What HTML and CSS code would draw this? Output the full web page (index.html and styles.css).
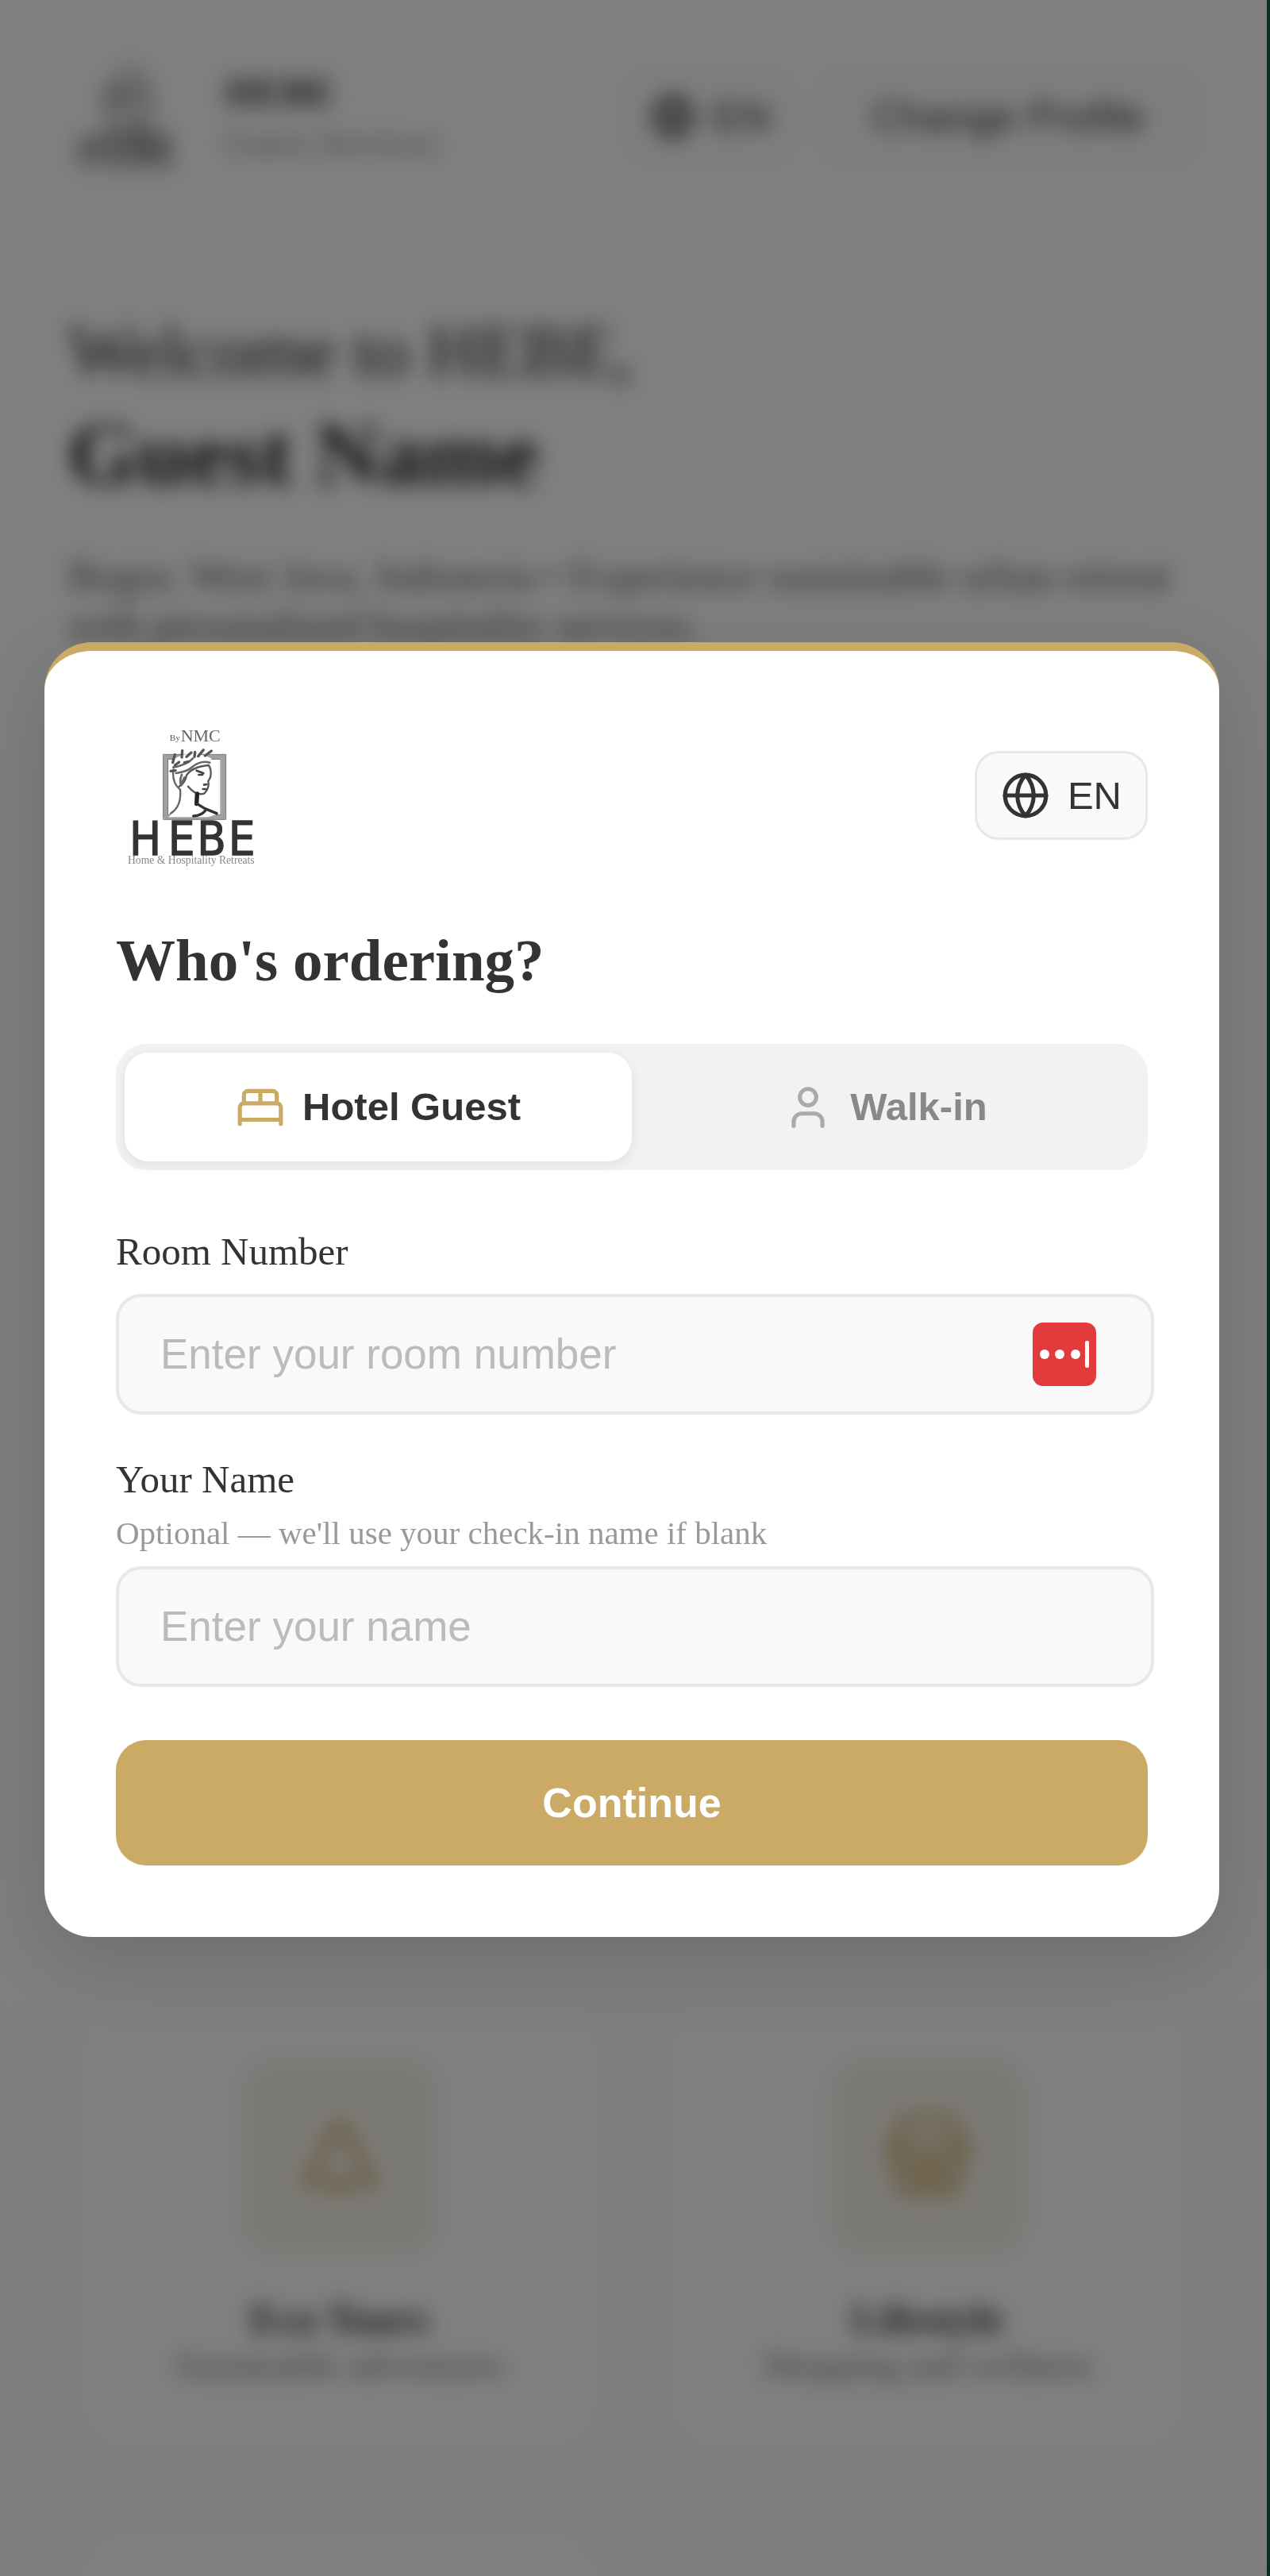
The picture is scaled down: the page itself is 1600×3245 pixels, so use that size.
FILE: index.html
```html
<!DOCTYPE html>
<html lang="en">

<head>
	<meta charset="UTF-8">
	<meta name="viewport" content="width=device-width, initial-scale=1.0">
	<title>HEBE - Guest Services</title>
	<link rel="stylesheet" href="styles.css">
</head>

<body>
	<!-- Shared icons -->
	<svg class="icon-defs" aria-hidden="true">
		<symbol id="logo" viewBox="51 60 570 540">
			<text x="254" y="124" font-size="34" fill="#555">By</text>
			<text x="296" y="126" font-size="66" fill="#666">NMC</text>
			<g fill="none" stroke-linecap="round" stroke-linejoin="round">
				<path d="M240 184H458V412H240Z" stroke="#a0a0a0" stroke-width="18" />
				<path d="M231 175H467V421H231ZM249 193H447V403H249Z" stroke="#777" stroke-width="3" />
				<path d="M262 198Q330 150 412 190L412 262Q414 280 398 318Q380 336 350 320L350 362L398 386L442 398L400 412H250L262 398Q296 370 294 310Q262 280 262 198Z" fill="#fff" stroke="none" />
				<path d="M268 232Q262 282 294 308Q300 372 258 398" stroke="#666" stroke-width="7" />
				<path d="M290 296Q312 284 318 254Q338 222 402 216Q414 232 408 262L400 276Q406 300 386 322Q356 334 324 296" stroke="#555" stroke-width="7" />
				<path d="M278 246Q322 240 340 222Q372 196 406 206M268 224Q320 214 342 190M300 252Q290 276 298 292M310 262L300 284" stroke="#666" stroke-width="8" />
				<path d="M266 206L274 176M274 216L290 204M300 186L302 160M310 206L326 202M318 184L336 168M348 184L350 166M362 182L382 158M388 180L412 162M258 238L276 236" stroke="#555" stroke-width="10" />
				<path d="M356 236L382 246M364 252L378 252M384 290L394 288M380 306L392 306" stroke="#444" stroke-width="8" />
				<path d="M358 324L356 362" stroke="#222" stroke-width="16" />
				<path d="M358 362L388 380L432 398M392 384Q374 408 344 408" stroke="#333" stroke-width="10" />
			</g>
			<g class="logo-name" font-size="178" fill="#333" stroke="#333" stroke-width="4">
				<text x="102" y="556">H</text>
				<text x="248" y="556">E</text>
				<text x="358" y="556">B</text>
				<text x="476" y="556">E</text>
			</g>
			<text x="96" y="588" font-size="41" fill="#888">Home &amp; Hospitality Retreats</text>
		</symbol>
		<symbol id="globe" viewBox="0 0 24 24">
			<circle cx="12" cy="12" r="10" />
			<path d="M2 12h20M12 2a15.3 15.3 0 0 1 4 10 15.3 15.3 0 0 1-4 10 15.3 15.3 0 0 1-4-10 15.3 15.3 0 0 1 4-10z" />
		</symbol>
	</svg>

	<div class="page">
		<!-- Header -->
		<header class="header">
			<svg class="header-logo" aria-hidden="true"><use href="#logo" /></svg>
			<div class="brand">
				<span class="brand-name">HEBE</span>
				<span class="brand-sub">Guest Services</span>
			</div>
			<button type="button" class="header-btn">
				<svg class="icon header-globe" aria-hidden="true"><use href="#globe" /></svg>
				EN
			</button>
			<button type="button" class="header-btn header-profile">Change Profile</button>
		</header>

		<!-- Welcome -->
		<section class="hero">
			<p class="hero-welcome">Welcome to HEBE,</p>
			<h1 class="hero-name">Guest Name</h1>
			<p class="hero-text">Bogor, West Java, Indonesia • Experience sustainable urban retreat with personalized hospitality services.</p>
		</section>

		<!-- Services -->
		<section class="services">
			<article class="card">
				<div class="card-icon">
					<svg class="icon" viewBox="0 0 24 24" aria-hidden="true">
						<path d="M12 4l4 6h-1l5 8H4l5-8H8zM12 18v2" />
					</svg>
				</div>
				<h3 class="card-title">Eco Tours</h3>
				<p class="card-text">Sustainable adventures</p>
			</article>
			<article class="card">
				<div class="card-icon">
					<svg class="icon" viewBox="0 0 24 24" aria-hidden="true">
						<path d="M3 9h18l-3 11H6zM4 9l3-6h10l3 6M9 13v5M12 13v5M15 13v5M4 13h16" />
					</svg>
				</div>
				<h3 class="card-title">Lifestyle</h3>
				<p class="card-text">Shopping and wellness</p>
			</article>
			<article class="card"></article>
		</section>
	</div>

	<!-- Guest dialog -->
	<div class="overlay">
		<div class="modal" role="dialog" aria-modal="true" aria-labelledby="modal-title">
			<div class="modal-header">
				<svg class="modal-logo" role="img" aria-label="HEBE by NMC"><use href="#logo" /></svg>
				<button type="button" class="lang-btn">
					<svg class="icon" aria-hidden="true"><use href="#globe" /></svg>
					EN
				</button>
			</div>

			<h2 id="modal-title" class="modal-title">Who's ordering?</h2>

			<!-- Guest type -->
			<div class="tabs">
				<button type="button" class="tab tab-active">
					<svg class="icon" viewBox="0 0 24 24" aria-hidden="true">
						<path d="M2 20v-8a2 2 0 0 1 2-2h16a2 2 0 0 1 2 2v8M4 10V6a2 2 0 0 1 2-2h12a2 2 0 0 1 2 2v4M12 4v6M2 18h20" />
					</svg>
					Hotel Guest
				</button>
				<button type="button" class="tab">
					<svg class="icon" viewBox="0 0 24 24" aria-hidden="true">
						<path d="M19 21v-2a4 4 0 0 0-4-4H9a4 4 0 0 0-4 4v2" />
						<circle cx="12" cy="7" r="4" />
					</svg>
					Walk-in
				</button>
			</div>

			<form class="guest-form">
				<!-- Room Number -->
				<div class="form-group">
					<label for="room-number">Room Number</label>
					<div class="field">
						<input type="text" id="room-number" name="room-number" placeholder="Enter your room number">
						<svg class="field-badge" viewBox="0 0 80 80" aria-hidden="true">
							<rect width="80" height="80" rx="13" fill="#e23b3b" />
							<circle cx="15" cy="40" r="6" fill="#fff" />
							<circle cx="34" cy="40" r="6" fill="#fff" />
							<circle cx="54" cy="40" r="6" fill="#fff" />
							<rect x="66" y="23" width="5" height="34" rx="2" fill="#fff" />
						</svg>
					</div>
				</div>
				<!-- Name -->
				<div class="form-group">
					<label for="guest-name">Your Name</label>
					<p class="hint" id="name-hint">Optional — we'll use your check-in name if blank</p>
					<div class="field">
						<input type="text" id="guest-name" name="guest-name" placeholder="Enter your name" aria-describedby="name-hint">
					</div>
				</div>
				<button type="submit" class="btn">Continue</button>
			</form>
		</div>
	</div>
</body>

</html>
```
FILE: styles.css
```css
* {
	box-sizing: border-box;
}

body {
	margin: 0;
	font-family: "Liberation Serif", "Times New Roman", serif;
	color: #333;
	background-color: #fff;
}

h1,
h2,
h3,
p {
	margin: 0;
}

button,
input {
	font-family: "Liberation Sans", Arial, sans-serif;
}

button {
	cursor: pointer;
}

.icon-defs {
	display: none;
}

.icon {
	flex: none;
	fill: none;
	stroke: currentColor;
	stroke-width: 2;
	stroke-linecap: round;
	stroke-linejoin: round;
}

.logo-name {
	font-family: "DejaVu Sans Condensed", Lato, sans-serif;
}

/* Page behind the dialog */
.page {
	height: 100vh;
	overflow: hidden;
	border-right: 4px solid #0f2a22;
}

/* Header */
.header {
	display: flex;
	align-items: center;
	gap: 30px;
	padding: 78px 86px 66px;
}

.header-logo {
	width: 145px;
	height: 138px;
	margin-right: 22px;
}

.brand {
	display: flex;
	flex-direction: column;
	gap: 8px;
	margin-right: auto;
}

.brand-name {
	font-size: 50px;
	font-weight: bold;
	line-height: 56px;
}

.brand-sub {
	font-size: 45px;
	line-height: 54px;
	color: #888;
}

.header-btn {
	display: flex;
	align-items: center;
	gap: 20px;
	padding: 26px;
	border: 4px solid #f5f5f5;
	border-radius: 30px;
	background-color: #fcfcfc;
	color: #333;
	font-size: 52px;
	line-height: 60px;
}

.header-globe {
	width: 60px;
	height: 60px;
}

.header-profile {
	padding: 26px 64px;
}

/* Welcome text */
.hero {
	min-height: 2243px;
	padding: 107px 86px 0;
}

.hero-welcome {
	margin-bottom: 8px;
	font-size: 90px;
	line-height: 108px;
	color: #222;
}

.hero-name {
	margin-bottom: 56px;
	font-size: 113px;
	line-height: 134px;
	color: #222;
}

.hero-text {
	font-size: 52px;
	line-height: 62px;
	color: #555;
}

/* Service cards */
.services {
	display: grid;
	grid-template-columns: 1fr 1fr;
	gap: 104px 94px;
	padding: 0 104px;
	background-color: #fcfcfc;
}

.card {
	display: flex;
	flex-direction: column;
	align-items: center;
	min-height: 560px;
	padding: 67px 30px;
	border-radius: 60px;
	background-color: #fff;
	text-align: center;
}

.card-icon {
	display: flex;
	align-items: center;
	justify-content: center;
	width: 250px;
	height: 250px;
	margin-bottom: 50px;
	border-radius: 45px;
	background-color: #f8f4ec;
	color: #d2b67c;
}

.card-icon .icon {
	width: 130px;
	height: 130px;
}

.card-title {
	font-size: 52px;
	line-height: 60px;
}

.card-text {
	font-size: 45px;
	line-height: 54px;
	color: #777;
}

/* Dialog */
.overlay {
	position: fixed;
	inset: 0 4px 0 0;
	display: flex;
	align-items: center;
	justify-content: center;
	padding: 4px 60px 0 56px;
	background-color: rgba(0, 0, 0, 0.5);
	backdrop-filter: blur(13px);
}

.modal {
	width: 100%;
	padding: 92px 90px 90px;
	border-top: 11px solid #cbaa66;
	border-radius: 60px;
	background-color: #fff;
	box-shadow: 0 30px 112px rgba(0, 0, 0, 0.15);
}

.modal-header {
	display: flex;
	align-items: center;
	justify-content: space-between;
	margin-bottom: 73px;
}

.modal-logo {
	width: 190px;
	height: 180px;
}

.lang-btn {
	display: flex;
	align-items: center;
	gap: 22px;
	padding: 22px 30px;
	border: 3px solid #e8e8e8;
	border-radius: 30px;
	background-color: #f9f9f9;
	color: #333;
	font-size: 49px;
	line-height: 62px;
}

.lang-btn .icon {
	width: 62px;
	height: 62px;
}

.modal-title {
	margin-bottom: 60px;
	font-size: 75px;
	line-height: 90px;
}

/* Guest type switch */
.tabs {
	display: flex;
	margin-bottom: 75px;
	padding: 11px;
	border-radius: 38px;
	background-color: #f2f2f2;
}

.tab {
	display: flex;
	flex: 1;
	align-items: center;
	justify-content: center;
	gap: 22px;
	padding: 35px;
	border: none;
	border-radius: 30px;
	background: none;
	color: #888;
	font-size: 49px;
	font-weight: bold;
	line-height: 67px;
}

.tab .icon {
	width: 62px;
	height: 62px;
	color: #aaa;
}

.tab-active {
	background-color: #fff;
	color: #333;
	box-shadow: 0 4px 16px rgba(0, 0, 0, 0.08);
}

.tab-active .icon {
	color: #cbaa66;
}

/* Form */
.form-group {
	margin-bottom: 54px;
}

label {
	display: block;
	margin-bottom: 25px;
	font-size: 49px;
	line-height: 56px;
}

.hint {
	margin: -10px 0 18px;
	font-size: 41px;
	line-height: 48px;
	color: #999;
}

/* The fields run slightly past the column */
.field {
	position: relative;
	margin-right: -8px;
}

input[type="text"] {
	display: block;
	width: 100%;
	padding: 42px 52px;
	border: 4px solid #e8e8e8;
	border-radius: 32px;
	background-color: #f9f9f9;
	color: #333;
	font-size: 53px;
	line-height: 60px;
}

input::placeholder {
	color: #bbb;
}

.field-badge {
	position: absolute;
	top: 50%;
	right: 73px;
	width: 80px;
	height: 80px;
	margin-top: -40px;
}

.btn {
	display: block;
	width: 100%;
	margin-top: 67px;
	padding: 49px;
	border: none;
	border-radius: 38px;
	background-color: #cbaa66;
	color: #fff;
	font-size: 52px;
	font-weight: bold;
	line-height: 60px;
}
```
